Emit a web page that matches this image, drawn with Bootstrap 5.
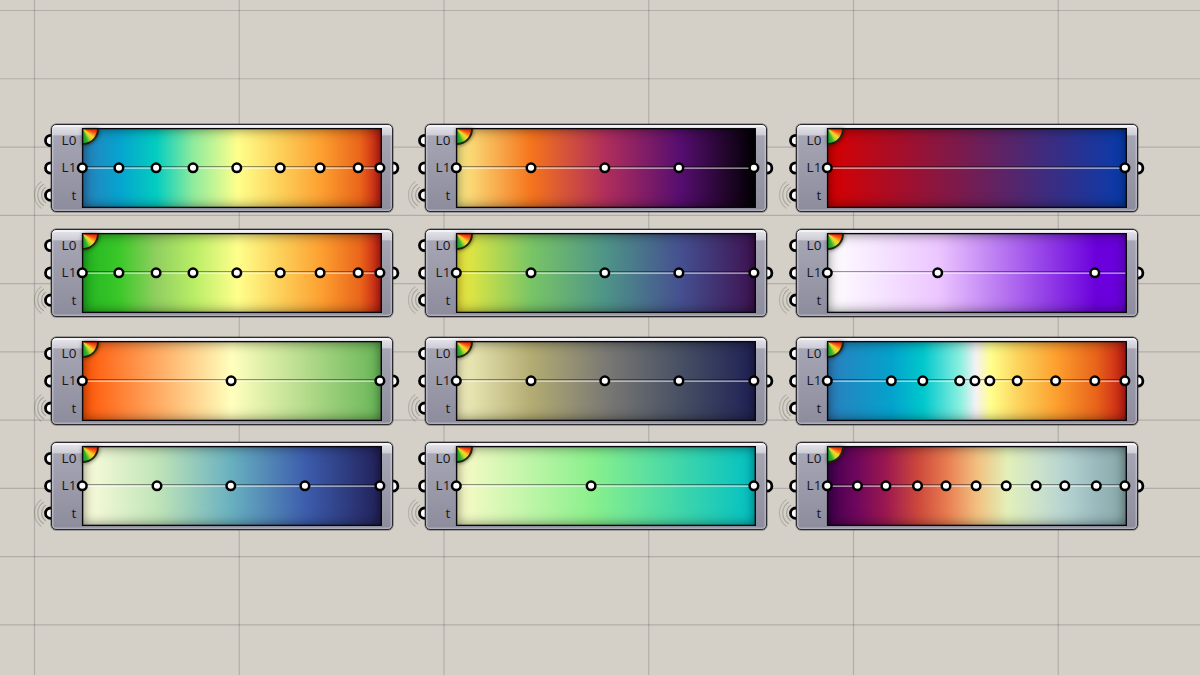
<!DOCTYPE html>
<html lang="en">
<head>
<meta charset="utf-8">
<meta name="viewport" content="width=device-width, initial-scale=1">
<title>Gradient components</title>
<link href="https://cdn.jsdelivr.net/npm/bootstrap@5.3.0/dist/css/bootstrap.min.css" rel="stylesheet">
<style>
  body { background: #d4d0c8; width: 1200px; height: 675px; }
  .canvas-lines { inset: 0; z-index: 0; }
  .canvas-lines line { stroke: #000; stroke-opacity: .16; stroke-width: 1.2; }
  .board {
    display: grid;
    grid-template-columns: 374px 371px 342px;
    grid-template-rows: 105px 108px 105px 88px;
    padding: 124px 0 0 51px;
    z-index: 1;
  }
  .node { width: 342px; height: 88px; }
  .ports { left: -20px; top: 0; width: 382px; height: 88px; }
  .capsule {
    width: 341.5px; height: 88px;
    border: 1px solid #29292e; border-radius: 5px;
    box-shadow: 0 0 0 .5px rgba(30,30,35,.6), inset 0 2px 0 0 #f4f4f8, inset 0 0 0 1.5px rgba(225,225,232,.4);
    background: linear-gradient(#e6e6ea 0, #cfced7 9.5px, #a6a5b4 11px, #8d8c9c 100%);
    padding: 3px 10px 3px 3px;
  }
  .labels { width: 21.4px; margin-right: 5.6px; margin-top: -1.2px; font: 13.5px/27.4px "Open Sans", "Noto Sans", sans-serif; color: #17171c; }
  .labels span { height: 27.4px; display: block; text-align: right; white-space: nowrap; }
  .ramp { width: 300px; height: 80px; }
  .ramp-fill { inset: 0; }
  .ramp-shade { inset: 0; box-shadow: inset 0 0 13px rgba(0,0,0,.6); }
  .wheel {
    left: 1px; top: 1px; width: 16.5px; height: 16px;
    border: solid rgba(18,22,8,.9); border-width: 0 2px 2px 0; border-bottom-right-radius: 17px;
    background: conic-gradient(from 90deg at 0 0, #e61800 0deg, #f45b10 18deg, #fbd52c 40deg, #c2da2c 54deg, #3cb32b 70deg, #169a32 90deg);
    box-shadow: 0 0 4px rgba(0,0,0,.7);
  }
  .overlay { left: -10px; top: 0; width: 320px; height: 80px; }
</style>
</head>
<body class="position-relative overflow-hidden m-0">
<svg class="canvas-lines position-absolute" width="1200" height="675" id="lines" aria-hidden="true"></svg>
<main class="board position-relative" id="board"></main>

<template id="node-template">
  <section class="node position-relative">
    <svg class="ports position-absolute" viewBox="-20 0 382 88" fill="none" aria-hidden="true">
      <g stroke="#000" stroke-opacity=".22" stroke-width="1.2">
        <path d="M-5 63A9.5 9.5 0 0 0-5 79"/>
        <path d="M-7 60A12.8 12.8 0 0 0-7 82" stroke-opacity=".2"/>
        <path d="M-9.500 57.500A16.500 16.500 0 0 0-9.500 84.500" stroke-opacity=".15"/>
      </g>
      <g fill="#fff" stroke="#000" stroke-width="2.8">
        <circle cx="-.3" cy="16.5" r="5.2"/><circle cx="-.3" cy="44" r="5.2"/><circle cx="-.3" cy="71.2" r="5.2"/>
        <circle cx="341.700" cy="44" r="5.2"/>
      </g>
    </svg>
    <div class="capsule position-relative d-flex">
      <div class="labels"><span>L0</span><span>L1</span><span>t</span></div>
      <div class="ramp position-relative">
        <div class="ramp-fill position-absolute"></div>
        <div class="ramp-shade position-absolute"></div>
        <div class="wheel position-absolute"></div>
        <svg class="overlay position-absolute" viewBox="-10 0 320 80" aria-hidden="true">
          <rect x="1" y="38" width="297.500" height="1.2" fill="#000" fill-opacity=".4"/>
          <rect x="1" y="39.4" width="297.500" height="1.6" fill="#fff" fill-opacity=".5"/>
          <rect x=".6" y=".6" width="298.700" height="78.800" fill="none" stroke="#08080c" stroke-width="1.4"/>
          <g class="knobs" fill="#fff" stroke="#000" stroke-width="2.5"></g>
        </svg>
      </div>
    </div>
  </section>
</template>

<script src="https://cdn.jsdelivr.net/npm/bootstrap@5.3.0/dist/js/bootstrap.bundle.min.js"></script>
<script>
  const fifths = [0, 25.1, 49.9, 74.8, 100];
  const nine = [0, 12.3, 24.8, 37.2, 51.9, 66.5, 79.9, 92.7, 100];
  const ramps = [
    { at: nine, colors: ['#2a80bb', '#06a3cf', '#03cdc0', '#90ec9c', '#ffff8c', '#fccf58', '#fd9f30', '#ea651a', '#c41a15'] },
    { at: fifths, colors: ['#fcf08a', '#f5741c', '#b02e5c', '#560e70', '#000000'] },
    { at: [0, 100], colors: ['#d80000', '#063cae'] },
    { at: nine, colors: ['#22b522', '#3ac828', '#90cf60', '#b9ed66', '#ffff8c', '#fccf58', '#fd9f30', '#ea651a', '#c41a15'] },
    { at: fifths, colors: ['#f4ec3c', '#78c566', '#4e9488', '#455090', '#3e1150'] },
    { at: [0, 37.1, 89.9], colors: ['#ffffff', '#ecc6ff', '#6a00dc'] },
    { at: [0, 50, 100], colors: ['#ff5505', '#ffffbe', '#66b556'] },
    { at: fifths, colors: ['#f4f2c0', '#b3ac72', '#7a7974', '#475064', '#1e2054'] },
    { at: [0, 21.5, 32.1, 44.5, 49.6, 54.6, 63.8, 76.7, 89.9, 100], colors: ['#2c7fbe', '#04a2cc', '#00c8cc', '#8cf0e0', '#f4f0f4', '#ffff8c', '#fcd35c', '#fd9e2e', '#e8631a', '#c41a15'] },
    { at: fifths, colors: ['#fdfddc', '#c0e4b8', '#68b0c0', '#3c5cac', '#222058'] },
    { at: [0, 45.3, 100], colors: ['#fcfbc8', '#8af08c', '#00c0c4'] },
    { at: [0, 10.1, 19.7, 30.3, 39.9, 50, 60.1, 70.2, 79.8, 90.4, 100], colors: ['#400050', '#70075c', '#9c1850', '#cc483c', '#e87c50', '#f2c080', '#e2f0b8', '#cce2cc', '#b4d2d0', '#98b8bc', '#86a6a6'] }
  ];

  const board = document.getElementById('board');
  const template = document.getElementById('node-template');
  for (const ramp of ramps) {
    const node = template.content.cloneNode(true);
    const stops = ramp.at.map((p, i) => `${ramp.colors[i]} ${p}%`).join(', ');
    node.querySelector('.ramp-fill').style.background = `linear-gradient(90deg, ${stops})`;
    node.querySelector('.knobs').innerHTML = ramp.at
      .map(p => `<circle cx="${(0.3 + p * 2.976).toFixed(1)}" cy="39.8" r="4.3"/>`).join('');
    board.append(node);
  }

  let lines = '';
  for (let i = 0; i < 6; i++) { const x = 34.5 + i * 204.75; lines += `<line x1="${x}" x2="${x}" y1="0" y2="675"/>`; }
  for (let i = 0; i < 10; i++) { const y = 10.5 + i * 68.27; lines += `<line y1="${y}" y2="${y}" x1="0" x2="1200"/>`; }
  document.getElementById('lines').innerHTML = lines;
</script>
</body>
</html>
